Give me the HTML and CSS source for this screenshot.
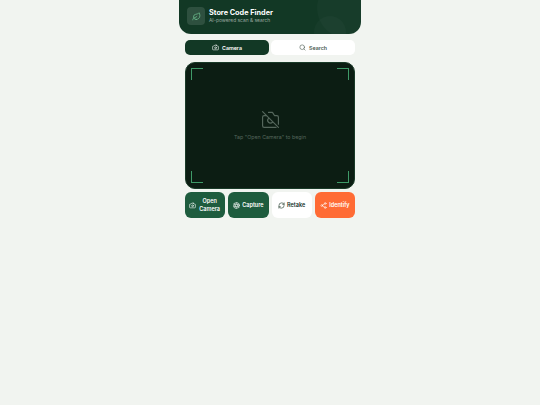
FILE: index.html
```html
<!DOCTYPE html>
<html lang="en">
<head>
<meta charset="utf-8">
<title>Store Code Finder</title>
<link rel="stylesheet" href="styles.css">
</head>
<body>
<div class="app">
  <header class="header">
    <span class="blob blob-a"></span>
    <span class="blob blob-b"></span>
    <div class="logo">
      <svg viewBox="0 0 24 24" class="logo-icon"><path d="M11 20A7 7 0 0 1 9.8 6.1C15.5 5 17 4.5 19 2c1 2 2 4.2 2 8 0 5.5-4.8 10-10 10Z"/><path d="M2 21c0-3 1.900-5.400 5.100-6 2.400-.5 4.900-2 5.900-3"/></svg>
    </div>
    <div class="titles">
      <div class="title">Store Code Finder</div>
      <div class="subtitle">AI-powered scan &amp; search</div>
    </div>
  </header>
  <main class="content">
    <div class="tabs">
      <div class="tab tab-active">
        <svg viewBox="0 0 24 24" class="icon"><path d="M14.500 4h-5L7 7H4a2 2 0 0 0-2 2v9a2 2 0 0 0 2 2h16a2 2 0 0 0 2-2V9a2 2 0 0 0-2-2h-3l-2.500-3Z"/><circle cx="12" cy="13" r="3"/></svg>
        Camera
      </div>
      <div class="tab">
        <svg viewBox="0 0 24 24" class="icon"><circle cx="11" cy="11" r="8"/><path d="m21 21-4.300-4.300"/></svg>
        Search
      </div>
    </div>
    <section class="viewport">
      <span class="corner tl"></span>
      <span class="corner tr"></span>
      <span class="corner bl"></span>
      <span class="corner br"></span>
      <svg viewBox="0 0 24 24" class="camera-off"><path d="m2 2 20 20"/><path d="M7 7H4a2 2 0 0 0-2 2v11a2 2 0 0 0 2 2h15"/><path d="M9.500 3h5L17 7h3a2 2 0 0 1 2 2v9"/><path d="M14.500 15.500a3.500 3.500 0 1 1-5-5"/></svg>
      <p class="hint">Tap "Open Camera" to begin</p>
    </section>
    <div class="actions">
      <div class="btn btn-green">
        <svg viewBox="0 0 24 24" class="icon"><path d="M14.500 4h-5L7 7H4a2 2 0 0 0-2 2v9a2 2 0 0 0 2 2h16a2 2 0 0 0 2-2V9a2 2 0 0 0-2-2h-3l-2.500-3Z"/><circle cx="12" cy="13" r="3"/></svg>
        <span class="btn-label">Open Camera</span>
      </div>
      <div class="btn btn-green">
        <svg viewBox="0 0 24 24" class="icon"><circle cx="12" cy="12" r="10"/><path d="m14.300 8 5.700 9.900M9.700 8h11.400M7.400 12l5.700-9.900M9.700 16 4 6.100M14.300 16H2.900M16.600 12l-5.700 9.900"/></svg>
        <span class="btn-label">Capture</span>
      </div>
      <div class="btn btn-white">
        <svg viewBox="0 0 24 24" class="icon"><path d="M3 12a9 9 0 0 1 9-9 9.800 9.800 0 0 1 6.700 2.700L21 8"/><path d="M21 3v5h-5"/><path d="M21 12a9 9 0 0 1-9 9 9.800 9.800 0 0 1-6.700-2.700L3 16"/><path d="M8 16H3v5"/></svg>
        <span class="btn-label">Retake</span>
      </div>
      <div class="btn btn-orange">
        <svg viewBox="0 0 24 24" class="icon"><circle cx="18" cy="5" r="3"/><circle cx="6" cy="12" r="3"/><circle cx="18" cy="19" r="3"/><path d="m8.600 13.500 6.800 4M15.400 6.500l-6.800 4"/></svg>
        <span class="btn-label">Identify</span>
      </div>
    </div>
  </main>
</div>
</body>
</html>
```
FILE: styles.css
```css
* { box-sizing: border-box; }
html, body { margin: 0; height: 100%; }
body {
  background: #f1f4f0;
  font-family: "Inter", "Liberation Sans", sans-serif;
  color: #14301f;
}
svg { fill: none; stroke: currentColor; stroke-width: 2; stroke-linecap: round; stroke-linejoin: round; flex: none; }
.app { width: 182px; margin: 0 auto; }
.header {
  position: relative;
  overflow: hidden;
  height: 34px;
  background: #123825;
  border-radius: 0 0 12px 12px;
  display: flex;
  align-items: center;
  gap: 4px;
  padding: 0 8px 2px;
  color: #fff;
}
.blob { position: absolute; border-radius: 50%; background: rgba(255,255,255,.025); }
.blob-a { width: 60px; height: 60px; right: -16px; top: -22px; }
.blob-b { width: 32px; height: 32px; right: 15px; top: 16px; }
.logo {
  width: 18px; height: 18px;
  border-radius: 4px;
  background: rgba(255,255,255,.12);
  display: flex; align-items: center; justify-content: center;
  color: #6fbf90;
}
.logo-icon { width: 9px; height: 9px; }
.titles { display: flex; flex-direction: column; }
.title { font-size: 7.300px; font-weight: 700; line-height: 9px; }
.subtitle { font-size: 4.900px; line-height: 7px; color: rgba(255,255,255,.55); }
.content { padding: 6px 6px 0; display: flex; flex-direction: column; }
.tabs { display: flex; gap: 2px; }
.tab {
  flex: 1;
  height: 15px;
  border-radius: 5px;
  background: #fff;
  display: flex; align-items: center; justify-content: center; gap: 3px;
  font-size: 5.300px; font-weight: 600;
  color: #4a5a50;
}
.tab-active { background: #123825; color: #fff; }
.icon { width: 7px; height: 7px; }
.viewport {
  position: relative;
  margin-top: 7px;
  height: 127px;
  background: #0c1d13;
  border: 1px solid #1a3a28;
  border-radius: 10px;
  display: flex; flex-direction: column; align-items: center; justify-content: center;
}
.corner { position: absolute; width: 12px; height: 12px; border: 0 solid #3f9a68; }
.tl { left: 5px; top: 5px; border-width: 1px 0 0 1px; }
.tr { right: 5px; top: 5px; border-width: 1px 1px 0 0; }
.bl { left: 5px; bottom: 5px; border-width: 0 0 1px 1px; }
.br { right: 5px; bottom: 5px; border-width: 0 1px 1px 0; }
.camera-off { width: 19px; height: 19px; color: #55675c; stroke-width: 1.500; }
.hint { margin: 5px 0 0; font-size: 5.300px; line-height: 7px; color: #55675c; }
.actions { display: grid; grid-template-columns: repeat(4, 1fr); gap: 3px; margin-top: 3px; }
.btn {
  height: 26px;
  border-radius: 6px;
  display: flex; align-items: center; justify-content: center; gap: 2px;
  padding: 0 4px;
  font-size: 5.500px; font-weight: 600; line-height: 8px;
  text-align: center;
}
.btn-label { min-width: 0; }
.btn-green { background: #1e5c3e; color: #fff; }
.btn-white { background: #fff; color: #14301f; }
.btn-orange { background: #ff6b35; color: #fff; }
```
